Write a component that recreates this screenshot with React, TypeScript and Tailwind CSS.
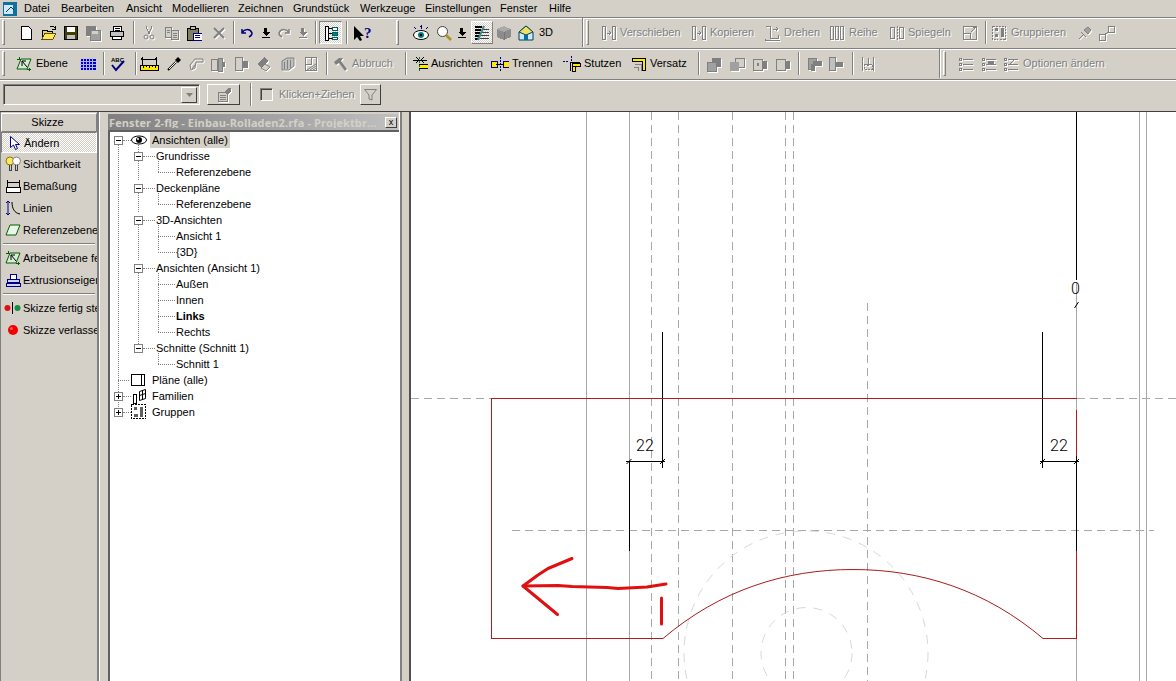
import React from "react";

const D = "[filter:drop-shadow(1px_1px_0_#fff)]";
const G = "#808080";

function S({ w = 16, h = 16, className = "", children }: { w?: number; h?: number; className?: string; children?: React.ReactNode }) {
  return (
    <svg width={w} height={h} viewBox={`0 0 ${w} ${h}`} shapeRendering="crispEdges" fill="none" className={`shrink-0 ${className}`}>
      {children}
    </svg>
  );
}

function Grip({ className = "" }: { className?: string }) {
  return <div className={`w-[3px] h-[25px] border-t border-l border-white border-b border-r border-b-[#808080] border-r-[#808080] shrink-0 ${className}`} />;
}
function Sep({ className = "" }: { className?: string }) {
  return <div className={`w-[2px] h-[23px] border-l border-[#808080] bg-white shrink-0 ${className}`} />;
}
function Divider({ className = "" }: { className?: string }) {
  return <div className={`w-[2px] h-[29px] border-l border-[#808080] bg-white shrink-0 ${className}`} />;
}
function Lbl({ className = "", off = false, children }: { className?: string; off?: boolean; children: React.ReactNode }) {
  return (
    <span className={`shrink-0 whitespace-nowrap ${off ? "text-[#808080] [text-shadow:1px_1px_0_#fff]" : "text-black"} ${className}`}>{children}</span>
  );
}

const DownArrow = ({ className = "", off = false }: { className?: string; off?: boolean }) => (
  <S className={`${className} ${off ? D : ""}`}>
    <path d="M6 3h3v4h3l-4 4-4-4h2z" fill={off ? G : "#000"} />
    <rect x="4" y="12" width="8" height="1" fill={off ? G : "#000"} />
  </S>
);

const Eye = ({ className = "" }: { className?: string }) => (
  <S className={className}>
    <ellipse cx="8" cy="10" rx="7.5" ry="4.5" fill="#fff" stroke="#000" shapeRendering="auto" />
    <circle cx="8" cy="10" r="3" fill="#008080" shapeRendering="auto" />
    <circle cx="8" cy="10" r="1.2" fill="#000" shapeRendering="auto" />
    <path d="M8 0v4M7 1h2M1 2l2 2M15 2l-2 2" stroke="#000080" />
  </S>
);

const Plane = ({ className = "", mark = true }: { className?: string; mark?: boolean }) => (
  <S className={className}>
    <path d="M5 3h10l-4 10H1z" fill="#d8ead8" stroke="#006000" shapeRendering="auto" />
    <path d="M3 1v3M1 3h4M13 12v3M11 13h4" stroke="#006000" />
    {mark && <path d="M6 5h4M6 5v5M6 5l5 6" stroke="#000" shapeRendering="auto" />}
  </S>
);

const Dim = ({ className = "" }: { className?: string }) => (
  <S w={19} className={className}>
    <path d="M2 1v8M16 1v8M2 3h14" stroke="#000" />
    <path d="M1 3l2-1M1 3l2 1M17 3l-2-1M17 3l-2 1" stroke="#000" />
    <rect x="0" y="9" width="18" height="5" fill="#ffe800" stroke="#000" />
    <path d="M3 10v2M6 10v1M9 10v2M12 10v1M15 10v2" stroke="#000" />
  </S>
);

const DisabledPair = ({ className = "", v = 0 }: { className?: string; v?: number }) => (
  <S w={18} className={`${className} ${D}`}>
    {v === 0 && <><rect x="7" y="2" width="9" height="9" fill="#808080" /><rect x="2" y="6" width="9" height="9" fill="#a0a0a0" stroke={G} /></>}
    {v === 1 && <><rect x="7" y="2" width="9" height="9" fill="#d4d0c8" stroke={G} /><rect x="2" y="6" width="9" height="9" fill="#a0a0a0" /></>}
    {v === 2 && <><rect x="8" y="5" width="8" height="8" fill="#808080" /><rect x="2" y="3" width="9" height="11" fill="#d4d0c8" stroke={G} /><path d="M6 7h2v3H6z" fill={G} /></>}
  </S>
);

const GapBars = ({ className = "", kind = 0 }: { className?: string; kind?: number }) => (
  <S className={`${className} ${D}`}>
    {kind === 0 && <><path d="M1.5 1.5h3v13h-3zM11.5 1.5h3v13h-3z" stroke={G} /><path d="M6 8h4M8 6l2 2-2 2" stroke={G} /></>}
    {kind === 1 && <><path d="M1.5 1.5h5v12h8v-4M1.5 13.5v2h14" stroke={G} /><path d="M9 4h5M12 2l2 2-2 2" stroke={G} /></>}
    {kind === 2 && <path d="M1.5 1.5h3v13h-3zM6.5 1.5h3v13h-3zM11.5 1.5h3v13h-3z" stroke={G} />}
    {kind === 3 && <><path d="M1.5 2.5h4v11h-4zM10.5 2.5h4v11h-4z" stroke={G} /><path d="M8 1v14" stroke={G} strokeDasharray="2 1" /></>}
    {kind === 4 && <><rect x="1.5" y="1.5" width="13" height="13" stroke={G} /><path d="M1 8h7v7M9 7l5-5M11 2h3v3" stroke={G} /></>}
    {kind === 5 && <><rect x="1.5" y="1.5" width="13" height="13" stroke={G} strokeDasharray="2 1" /><rect x="4" y="3" width="3" height="3" fill={G} /><rect x="4" y="9" width="3" height="3" fill={G} /><rect x="10" y="3" width="3" height="9" fill={G} /></>}
    {kind === 6 && <path d="M2 14l4-4M4 7l5 5M7 5l4 4 3-4-3-3z" stroke={G} fill="#a0a0a0" shapeRendering="auto" />}
  </S>
);

const Checks = ({ className = "", v = 0 }: { className?: string; v?: number }) => (
  <S className={`${className} ${D}`}>
    <rect x="1" y="2" width="2" height="2" stroke={G} />
    <rect x="1" y="7" width="2" height="2" stroke={G} />
    <rect x="1" y="12" width="2" height="2" stroke={G} />
    <path d="M5 3h10M5 8h10M5 13h10" stroke={G} />
    {v === 1 && <rect x="7" y="5" width="6" height="3" fill={G} />}
    {v === 2 && <path d="M6 9l6-6" stroke={G} shapeRendering="auto" />}
  </S>
);

function Toolbar1() {
  return (
    <div className="h-[31px] pb-[2px] flex items-center border-t border-white border-b border-b-[#808080]">
      <Grip className="ml-[2px]" />
      <S className="ml-[13px]"><path d="M3.5 1.5h7l3 3v10h-10z" fill="#fff" stroke="#000" /></S>
      <S className="ml-[7px]"><path d="M1.5 5.5h5v1h5v7h-10z" fill="#e8d060" stroke="#000" /><path d="M4 8h11l-3 6H1z" fill="#ffe860" stroke="#605000" /><path d="M9 1h3l3 3M14 1v3h-3" stroke="#000" /></S>
      <S className="ml-[6px]"><rect x="1.5" y="1.5" width="13" height="13" fill="#404000" stroke="#000" /><rect x="4" y="2" width="8" height="5" fill="#fff" /><rect x="4" y="10" width="8" height="4" fill="#c0c0c0" /></S>
      <S className={`ml-[6px] ${D}`}><rect x="1" y="1" width="10" height="10" fill={G} /><rect x="5" y="5" width="10" height="10" fill="#a0a0a0" stroke={G} /><rect x="7" y="6" width="6" height="3" fill="#d4d0c8" /></S>
      <S w={16} className="ml-[8px]"><path d="M4.5 1.5h8v5h-8z" fill="#fff" stroke="#000" /><path d="M1.5 6.5h13v5h-13z" fill="#c0c0c0" stroke="#000" /><path d="M3.5 11.5h9v3h-9z" fill="#fff" stroke="#000" /><path d="M6 3h5M6 5h5" stroke="#000" /></S>
      <Sep className="ml-[8px]" />
      <S className={`ml-[6px] ${D}`}><path d="M5 1l3 8M11 1L8 9" stroke={G} /><circle cx="5" cy="12" r="2" stroke={G} shapeRendering="auto" /><circle cx="11" cy="12" r="2" stroke={G} shapeRendering="auto" /></S>
      <S className={`ml-[7px] ${D}`}><path d="M1.5 2.5h6v10h-6zM7.5 5.5h7v9h-7z" stroke={G} fill="#d4d0c8" /><path d="M3 5h3M3 7h3M9 8h4M9 10h4M9 12h4" stroke={G} /></S>
      <S className="ml-[6px]"><rect x="1" y="3" width="11" height="12" fill="#808060" stroke="#000" /><rect x="4" y="1" width="5" height="3" fill="#c0c0c0" stroke="#000" /><rect x="7" y="8" width="9" height="7" fill="#fff" stroke="#000080" /><path d="M9 10h5M9 12h5" stroke="#000080" /></S>
      <S className={`ml-[9px] ${D}`}><path d="M3 3l10 10M13 3L3 13" stroke={G} strokeWidth="2" shapeRendering="auto" /></S>
      <Sep className="ml-[6px]" />
      <S className="ml-[4px]"><path d="M3 8c2-4 8-5 10 0 0 2-1 3-3 4M3 4v4h4" stroke="#000080" strokeWidth="1.5" shapeRendering="auto" /></S>
      <DownArrow className="ml-[3px]" />
      <S className={`ml-[2px] ${D}`}><path d="M13 8C11 4 5 3 3 8c0 2 1 3 3 4M13 4v4H9" stroke={G} strokeWidth="1.5" shapeRendering="auto" /></S>
      <DownArrow off className="ml-[3px]" />
      <Sep className="ml-[4px]" />
      <div className="ml-[2px] w-[23px] h-[23px] flex items-center justify-center border border-[#808080] border-b-white border-r-white [background:repeating-conic-gradient(#fff_0_25%,#d4d0c8_0_50%)_0_0/2px_2px] shrink-0">
        <S><rect x="2" y="1" width="3" height="14" fill="#fff" stroke="#000" /><rect x="9" y="2" width="5" height="3" fill="#fff" stroke="#006060" /><rect x="9" y="7" width="5" height="3" fill="#008080" stroke="#006060" /><rect x="9" y="12" width="5" height="2" fill="#fff" stroke="#006060" /><path d="M5 3h4M5 8h4M5 13h4" stroke="#000" /></S>
      </div>
      <Sep className="ml-[4px]" />
      <S w={20} className="ml-[5px]"><path d="M1 1v14l3-3 3 4 2-1-2-4h4z" fill="#000" shapeRendering="auto" /><text x="11" y="13" fontFamily="'Liberation Serif',serif" fontWeight="bold" fontSize="15" fill="#000080">?</text></S>
      <Grip className="ml-[23px]" />
      <Eye className="ml-[14px]" />
      <S className="ml-[7px]"><circle cx="6.5" cy="6.5" r="5" fill="#fff" stroke="#404040" shapeRendering="auto" /><path d="M10 10l5 5" stroke="#b09020" strokeWidth="2.5" shapeRendering="auto" /></S>
      <DownArrow className="ml-[2px]" />
      <div className="ml-[1px] w-[22px] h-[23px] flex items-center justify-center border border-white border-b-[#808080] border-r-[#808080] [background:repeating-conic-gradient(#fff_0_25%,#d4d0c8_0_50%)_0_0/2px_2px] shrink-0">
        <S><path d="M1 2h7M1 5h6M1 8h5M1 11h4M1 14h3" stroke="#000" strokeWidth="2" /><path d="M9 4h6M8 7h7M7 10h8M6 13h9" stroke="#404040" /><path d="M10 1L4 15" stroke="#3a8a8a" strokeWidth="2" shapeRendering="auto" /></S>
      </div>
      <S className={`ml-[3px]`}><path d="M8 1l7 3v8l-7 3-7-3V4z" fill="#8c8c8c" /><path d="M8 1l7 3-7 3-7-3z" fill="#aaa" /><path d="M8 7v8" stroke="#777" /></S>
      <S className="ml-[6px]"><path d="M8 1l7 6v8H1V7z" fill="#cfe8f8" stroke="#004060" shapeRendering="auto" /><path d="M8 1l7 6-7 3-7-3z" fill="#f0e060" stroke="#004060" shapeRendering="auto" /><rect x="6" y="10" width="4" height="5" fill="#0070a0" /></S>
      <Lbl className="ml-[5px] w-[16px]">3D</Lbl>
      <Divider className="ml-[27px]" />
      <Grip className="ml-[2px]" />
      <GapBars kind={0} className="ml-[12px]" />
      <Lbl off className="ml-[3px] w-[60px]">Verschieben</Lbl>
      <GapBars kind={0} className="ml-[11px]" />
      <Lbl off className="ml-[3px] w-[43px]">Kopieren</Lbl>
      <GapBars kind={1} className="ml-[11px]" />
      <Lbl off className="ml-[4px] w-[36px]">Drehen</Lbl>
      <GapBars kind={2} className="ml-[9px]" />
      <Lbl off className="ml-[4px] w-[29px]">Reihe</Lbl>
      <GapBars kind={3} className="ml-[11px]" />
      <Lbl off className="ml-[3px] w-[43px]">Spiegeln</Lbl>
      <GapBars kind={4} className="ml-[11px]" />
      <Sep className="ml-[7px]" />
      <GapBars kind={5} className="ml-[4px]" />
      <Lbl off className="ml-[4px] w-[53px]">Gruppieren</Lbl>
      <GapBars kind={6} className="ml-[13px]" />
      <S w={18} className={`ml-[5px] ${D}`}><rect x="1.5" y="9.5" width="6" height="6" stroke={G} /><rect x="10.5" y="1.5" width="6" height="6" stroke={G} /><path d="M7 9l4-2" stroke={G} /></S>
    </div>
  );
}

const OffShape = ({ className = "", v = 0 }: { className?: string; v?: number }) => (
  <S className={`${className} ${D}`}>
    {v === 0 && <path d="M3 14l-1-5 5-6h8v3H8l-1 6zM4 13l3-4" stroke={G} shapeRendering="auto" />}
    {v === 1 && <><rect x="1.5" y="3.5" width="6" height="11" stroke={G} fill="#d4d0c8" /><rect x="8" y="2" width="4" height="13" fill="#a0a0a0" stroke={G} /><rect x="13" y="6" width="2" height="5" fill={G} /></>}
    {v === 2 && <><rect x="2.5" y="1.5" width="7" height="13" stroke={G} fill="#d4d0c8" /><rect x="10" y="5" width="5" height="7" fill={G} /></>}
    {v === 3 && <><path d="M1 8l7-7 4 4-7 7z" fill="#808080" /><path d="M5 12l4-4 5 3-4 4z" fill="#d4d0c8" stroke={G} shapeRendering="auto" /></>}
    {v === 4 && <><path d="M2 5l5-3h7v8l-5 4H2z" stroke={G} fill="#c0c0c0" shapeRendering="auto" /><path d="M4 6v7M7 4v9M10 4v8" stroke={G} /></>}
    {v === 5 && <><rect x="2.5" y="1.5" width="11" height="13" stroke={G} /><path d="M8 2v6H3" stroke={G} /><path d="M4 14l9-6M7 14l6-4M10 14l3-2" stroke={G} shapeRendering="auto" /></>}
    {v === 6 && <><path d="M1.5 2.5h8v6h-3v5h-5z" fill="#a0a0a0" stroke={G} /><rect x="6" y="5" width="9" height="5" fill={G} /><rect x="4" y="8" width="4" height="7" fill="#808080" /></>}
    {v === 7 && <><rect x="1.5" y="1.5" width="6" height="13" fill="#c0c0c0" stroke={G} /><rect x="8" y="6" width="7" height="5" fill="#808080" /></>}
    {v === 8 && <><path d="M2.5 1v14M13.5 1v14" stroke={G} /><rect x="4" y="8" width="8" height="5" stroke={G} strokeDasharray="2 1" /><path d="M8 2v8M6 8l2 2 2-2" stroke={G} /></>}
  </S>
);

function Toolbar2() {
  return (
    <div className="h-[31px] pb-[2px] flex items-center border-t border-white border-b border-b-[#808080]">
      <Grip className="ml-[2px]" />
      <Plane className="ml-[11px]" />
      <Lbl className="ml-[4px] w-[32px]">Ebene</Lbl>
      <S className="ml-[12px]"><rect x="0.5" y="2.5" width="15" height="11" fill="#0000c8" /><path d="M3.5 2v12M6.5 2v12M9.5 2v12M12.5 2v12M0 5.5h16M0 8.5h16M0 11.5h16" stroke="#b0b0ff" /></S>
      <Sep className="ml-[7px]" />
      <S className="ml-[5px]"><text x="1" y="6" fontFamily="'Liberation Sans',sans-serif" fontSize="6" fontWeight="bold" fill="#000">ABC</text><path d="M2 9l4 5 8-9" stroke="#000080" strokeWidth="2" shapeRendering="auto" /></S>
      <Sep className="ml-[9px]" />
      <Dim className="ml-[3px]" />
      <S className="ml-[7px]"><path d="M2 14l8-8" stroke="#000" strokeWidth="2" shapeRendering="auto" /><path d="M3 13l7-7" stroke="#fff" shapeRendering="auto" /><path d="M9 4l3 3 3-3-3-3z" fill="#000" shapeRendering="auto" /></S>
      <OffShape v={0} className="ml-[6px]" />
      <OffShape v={1} className="ml-[6px]" />
      <OffShape v={2} className="ml-[7px]" />
      <OffShape v={3} className="ml-[7px]" />
      <OffShape v={4} className="ml-[8px]" />
      <OffShape v={5} className="ml-[7px]" />
      <Sep className="ml-[7px]" />
      <S className={`ml-[4px] ${D}`}><path d="M2 6l5-4h4l-2 3 6 8-2 2-6-8-3 2z" fill={G} shapeRendering="auto" /></S>
      <Lbl off className="ml-[4px] w-[42px]">Abbruch</Lbl>
      <Sep className="ml-[11px]" />
      <S className="ml-[5px]"><path d="M1 4h14" stroke="#000" /><path d="M4 1l3 3-3 3M12 1L9 4l3 3" stroke="#000" /><rect x="7" y="8" width="9" height="1" fill="#000" /><rect x="7" y="9" width="9" height="3" fill="#ffe800" /><rect x="7" y="12" width="9" height="1" fill="#000" /><path d="M7 1v15" stroke="#008000" strokeDasharray="2 2" /></S>
      <Lbl className="ml-[3px] w-[51px]">Ausrichten</Lbl>
      <S w={18} className="ml-[9px]"><rect x="0" y="5" width="6" height="6" fill="#ffe800" stroke="#000080" /><rect x="12" y="5" width="6" height="6" fill="#ffe800" stroke="#000080" /><path d="M9 1v14" stroke="#000080" strokeDasharray="2 1" /><path d="M5 8h8" stroke="#000" /></S>
      <Lbl className="ml-[3px] w-[41px]">Trennen</Lbl>
      <S w={18} className="ml-[10px]"><path d="M0 5h6M8 0v5" stroke="#000080" strokeDasharray="2 1" /><path d="M7 15V6h10" stroke="#000" strokeWidth="1" /><rect x="9" y="7" width="3" height="8" fill="#ffe800" stroke="#000" /><rect x="9" y="7" width="8" height="3" fill="#ffe800" stroke="#000" /></S>
      <Lbl className="ml-[3px] w-[37px]">Stutzen</Lbl>
      <S className="ml-[10px]"><path d="M1.5 2.5h13v12h-3v-9h-10z" fill="#ffe800" stroke="#000" /><path d="M4 8h6v7" stroke={G} /><path d="M3 11h4v4" stroke={G} /></S>
      <Lbl className="ml-[3px] w-[37px]">Versatz</Lbl>
      <Sep className="ml-[11px]" />
      <DisabledPair v={0} className="ml-[5px]" />
      <DisabledPair v={1} className="ml-[5px]" />
      <DisabledPair v={2} className="ml-[5px]" />
      <S w={17} className={`ml-[5px] ${D}`}><rect x="8" y="5" width="8" height="8" fill="#808080" /><rect x="2" y="3" width="9" height="11" fill="#d4d0c8" stroke={G} /></S>
      <Sep className="ml-[7px]" />
      <OffShape v={6} className="ml-[7px]" />
      <OffShape v={7} className="ml-[5px]" />
      <Sep className="ml-[8px]" />
      <OffShape v={8} className="ml-[6px]" />
      <Divider className="ml-[63px]" />
      <Grip className="ml-[2px]" />
      <Checks className="ml-[12px]" />
      <Checks v={1} className="ml-[7px]" />
      <Checks v={2} className="ml-[6px]" />
      <Lbl off className="ml-[4px] w-[80px]">Optionen ändern</Lbl>
    </div>
  );
}

function Toolbar3() {
  return (
    <div className="h-[31px] pb-[3px] flex items-center border-t border-white">
      <div className="ml-[3px] w-[197px] h-[21px] flex items-center justify-end pr-[2px] border border-[#808080] border-b-white border-r-white shadow-[inset_1px_1px_0_#404040] shrink-0">
        <div className="w-[16px] h-[16px] flex items-center justify-center border border-white border-b-[#404040] border-r-[#404040]">
          <S w={7} h={4}><path d="M0 0h7L3.5 4z" fill={G} shapeRendering="auto" /></S>
        </div>
      </div>
      <div className="ml-[7px] w-[33px] h-[21px] flex items-center justify-center border border-white border-b-[#404040] border-r-[#404040] shrink-0">
        <S className={D}><path d="M2.5 5.5h9v9h-9z" fill="#d4d0c8" stroke={G} /><path d="M4 8h6M4 10h6M4 12h6" stroke={G} /><path d="M8 5l4-4h3v3l-4 4" fill={G} /></S>
      </div>
      <Sep className="ml-[10px]" />
      <div className="ml-[8px] w-[13px] h-[13px] border border-[#808080] border-b-white border-r-white shadow-[inset_1px_1px_0_#404040] shrink-0" />
      <Lbl off className="ml-[6px] w-[74px]">Klicken+Ziehen</Lbl>
      <div className="ml-[7px] w-[21px] h-[21px] flex items-center justify-center border border-white border-b-[#404040] border-r-[#404040] shrink-0">
        <S w={13} h={13}><path d="M.5 1.5h12L8 7v5L5 11V7z" fill="#d4d0c8" stroke={G} shapeRendering="auto" /></S>
      </div>
    </div>
  );
}

function SideRow({ icon, children }: { icon: React.ReactNode; children: React.ReactNode }) {
  return (
    <div className="h-[22px] flex items-center overflow-hidden whitespace-nowrap">
      <div className="w-[22px] flex justify-center shrink-0 pl-[2px]">{icon}</div>
      <span>{children}</span>
    </div>
  );
}

function LeftPanel() {
  return (
    <div className="w-[97px] shrink-0 pt-[1px] border-l border-[#808080]">
      <div className="h-[19px] pr-[3px] flex items-center justify-center border border-white border-b-[#808080] border-r-[#808080] shadow-[1px_1px_0_#404040]">Skizze</div>
      <div className="h-[21px] pt-[1px] flex items-center border border-[#808080] border-b-white border-r-white [background:repeating-conic-gradient(#fff_0_25%,#d4d0c8_0_50%)_0_0/2px_2px]">
        <div className="w-[21px] flex justify-center shrink-0 pl-[3px]">
          <S><path d="M4.5 1.5v11l3-2.5 2 4.5 2-1-2-4h4z" fill="#fff" stroke="#000080" shapeRendering="auto" /></S>
        </div>
        <span className="ml-[1px]">Ändern</span>
      </div>
      <SideRow icon={<S><circle cx="5" cy="5" r="4" fill="#ffe860" stroke="#808000" shapeRendering="auto" /><circle cx="11.5" cy="5" r="4" fill="#fff" stroke={G} shapeRendering="auto" /><path d="M4 9v5h2V9M10.5 9v5h2V9" stroke="#404040" /></S>}>Sichtbarkeit</SideRow>
      <SideRow icon={<S><path d="M2 2v9M14 2v9M2 4h12" stroke="#000" /><rect x="1" y="9" width="14" height="5" fill="#fff" stroke="#000" /></S>}>Bemaßung</SideRow>
      <SideRow icon={<S><path d="M3 1v14M1 3l2-2 2 2M1 13l2 2 2-2" stroke="#000080" shapeRendering="auto" /><path d="M7 2c0 6 2 11 8 12" stroke="#000" shapeRendering="auto" /></S>}>Linien</SideRow>
      <SideRow icon={<S><path d="M5 3h10l-4 10H1z" fill="#eaf5ea" stroke="#006000" shapeRendering="auto" /></S>}>Referenzebene</SideRow>
      <div className="h-[6px] flex items-center"><div className="w-[92px] ml-[2px] h-[2px] border-t border-[#808080] bg-white" /></div>
      <SideRow icon={<Plane />}>Arbeitsebene festlegen</SideRow>
      <SideRow icon={<S><path d="M5 2h6v5H5z" fill="#fff" stroke="#000080" /><path d="M2 7h12v3H2zM1 11h14v3H1z" fill="#d0d0f0" stroke="#000080" /></S>}>Extrusionseigenschaften</SideRow>
      <div className="h-[6px] flex items-center"><div className="w-[92px] ml-[2px] h-[2px] border-t border-[#808080] bg-white" /></div>
      <SideRow icon={<S w={18}><circle cx="3.5" cy="8" r="3" fill="#e01010" shapeRendering="auto" /><path d="M8.5 2v12" stroke="#000" /><circle cx="13.5" cy="8" r="3" fill="#109040" shapeRendering="auto" /></S>}>Skizze fertig stellen</SideRow>
      <SideRow icon={<S><circle cx="8" cy="8" r="5" fill="#f00000" shapeRendering="auto" /><circle cx="6.5" cy="6.5" r="1.5" fill="#ff6060" shapeRendering="auto" /></S>}>Skizze verlassen</SideRow>
    </div>
  );
}

function Box({ plus = false, className = "" }: { plus?: boolean; className?: string }) {
  return (
    <S w={9} h={9} className={className}>
      <rect x="0.5" y="0.5" width="8" height="8" fill="#fff" stroke={G} />
      <path d="M2 4.5h5" stroke="#000" />
      {plus && <path d="M4.5 2v5" stroke="#000" />}
    </S>
  );
}
const Dots = ({ className }: { className: string }) => <div className={`border-t border-dotted border-[#808080] shrink-0 ${className}`} />;

const L1 = ({ children }: { children: React.ReactNode }) => (
  <div className="h-4 flex items-center">
    <Box className="ml-[24px]" />
    <Dots className="w-[12px]" />
    <span className="ml-[1px]">{children}</span>
  </div>
);
const L2 = ({ children, bold = false }: { children: React.ReactNode; bold?: boolean }) => (
  <div className="h-4 flex items-center">
    <Dots className="ml-[48px] w-[17px]" />
    <span className={`ml-[1px] ${bold ? "font-bold" : ""}`}>{children}</span>
  </div>
);

function TreeGuides() {
  return (
    <svg width="70" height="290" viewBox="110 132 70 290" className="absolute left-0 top-0 pointer-events-none" shapeRendering="crispEdges" fill="none" stroke="#808080" strokeDasharray="1 1">
      <path d="M118.5 145v247M118.5 392v16M138.5 145v7M138.5 161v19M138.5 189v23M138.5 221v39M138.5 269v75" />
      <path d="M158.5 161v11M158.5 193v11M158.5 225v26M158.5 273v59M158.5 353v11" />
      <path d="M118 380h12" />
    </svg>
  );
}

const Eye2 = () => (
  <S>
    <ellipse cx="8" cy="8" rx="7.5" ry="4" fill="#fff" stroke="#000" shapeRendering="auto" />
    <circle cx="8" cy="8" r="3" fill="#000" shapeRendering="auto" />
    <circle cx="7" cy="7" r="1" fill="#fff" shapeRendering="auto" />
  </S>
);

function Tree() {
  return (
    <div className="relative flex-1 bg-white overflow-hidden border-l-2 border-t-2 border-[#606060]">
      <TreeGuides />
      <div className="relative">
        <div className="h-4 flex items-center">
          <Box className="ml-[4px]" />
          <Dots className="w-[8px]" />
          <Eye2 />
          <span className="ml-[3px] px-[2px] h-4 flex items-center bg-[#d4d0c8]">Ansichten (alle)</span>
        </div>
        <L1>Grundrisse</L1>
        <L2>Referenzebene</L2>
        <L1>Deckenpläne</L1>
        <L2>Referenzebene</L2>
        <L1>3D-Ansichten</L1>
        <L2>Ansicht 1</L2>
        <L2>{"{3D}"}</L2>
        <L1>Ansichten (Ansicht 1)</L1>
        <L2>Außen</L2>
        <L2>Innen</L2>
        <L2 bold>Links</L2>
        <L2>Rechts</L2>
        <L1>Schnitte (Schnitt 1)</L1>
        <L2>Schnitt 1</L2>
        <div className="h-4 flex items-center">
          <S className="ml-[20px]"><rect x="1.5" y="2.5" width="13" height="11" fill="#fff" stroke="#000" /><path d="M11.5 3v10" stroke="#000" /></S>
          <span className="ml-[6px]">Pläne (alle)</span>
        </div>
        <div className="h-4 flex items-center">
          <Box plus className="ml-[4px]" />
          <Dots className="w-[8px]" />
          <S><path d="M2.5 6.5h3v9h-3z" stroke="#000" /><path d="M8.5 3.5l6-2v9l-6 2zM11.5 3v8M8.5 7.5l6-2" stroke="#000" shapeRendering="auto" /></S>
          <span className="ml-[5px]">Familien</span>
        </div>
        <div className="h-4 flex items-center">
          <Box plus className="ml-[4px]" />
          <Dots className="w-[8px]" />
          <S><rect x="0.5" y="0.5" width="14" height="14" stroke="#000" strokeDasharray="2 1" /><rect x="3" y="3" width="3" height="3" fill="#606060" /><rect x="3" y="10" width="4" height="3" fill="#606060" /><rect x="9" y="3" width="3" height="10" fill="#606060" /></S>
          <span className="ml-[5px]">Gruppen</span>
        </div>
      </div>
    </div>
  );
}

function Browser() {
  return (
    <div className="w-[291px] ml-[8px] shrink-0 flex flex-col pt-[2px]">
      <div className="h-[16px] mr-[1px] flex items-center bg-gradient-to-r from-[#808080] to-[#c0c0c0] pl-[1px] pr-[1px] shrink-0">
        <span className="flex-1 overflow-hidden font-['Open_Sans','DejaVu_Sans',sans-serif] font-bold text-[11px] tracking-[0.1px] text-[#d4d0c8] whitespace-nowrap">Fenster 2-flg - Einbau-Rolladen2.rfa - Projektbr...</span>
        <div className="w-[12px] h-[11px] bg-[#d4d0c8] border border-white border-b-[#404040] border-r-[#404040] flex items-center justify-center text-[9px] leading-none text-black shrink-0">x</div>
      </div>
      <Tree />
    </div>
  );
}

function Canvas() {
  const gray = "#a8a8a8";
  return (
    <div className="flex-1 bg-white overflow-hidden">
      <svg width="765" height="569" viewBox="411 112 765 569" fill="none" className="block">
        <g stroke={gray} shapeRendering="crispEdges">
          <path d="M586.5 112v569M629.5 112v569M1076.5 283v115M1076.5 639v42M1146.5 112v569M1139.5 112v569" />
          <path d="M651.5 112v569M678.5 112v569M732.5 112v569M785.5 112v569M793.5 112v569" strokeDasharray="8 5" />
          <path d="M867.5 303v378" strokeDasharray="8 5" />
          <path d="M411 398.5h80M1077 398.5h99M512 530.5h642" strokeDasharray="8 5" />
          <path d="M1076.5 398v12" />
        </g>
        <g stroke="#d8d8d8" strokeDasharray="9 8">
          <circle cx="806" cy="653" r="122" />
          <circle cx="806.5" cy="653" r="45.5" />
        </g>
        <g stroke="#000" shapeRendering="crispEdges">
          <path d="M1076.5 112v168M1076.5 456v95M662.5 332v136M629.5 461v90M1042.5 332v136M626 461.5h39M1040 461.5h39" />
        </g>
        <g stroke="#000" strokeWidth="1">
          <path d="M626.5 464l5-5M660 464l5-5M1040 464l5-5M1074 464l5-5M1074.5 308l4-6" />
        </g>
        <g stroke="#b01c1c" shapeRendering="crispEdges">
          <path d="M491.5 398.5h585M491.5 398v241M491 638.5h172M1043 638.5h34M1076.5 410v46M1076.5 551v88" />
        </g>
        <path d="M663 638.5C720 590 785 569.5 853 569.5C921 569.5 986 590 1043 638.5" stroke="#a81c1c" />
        <g stroke="#e01010" strokeWidth="3" strokeLinejoin="round" strokeLinecap="round">
          <path d="M523 586L558 585.5L572 586.5L607 587.5L618 588.5L647 587L666 584" />
          <path d="M572 558.5L548 568.5L538 575L523 586L557.5 614.5" />
          <path d="M661.5 598v26" />
        </g>
        <g fill="#000" fontFamily="Roboto,'Liberation Sans',sans-serif" fontWeight="300" fontSize="16">
          <text x="636" y="451">22</text>
          <text x="1050" y="451">22</text>
          <text x="1071" y="294">0</text>
        </g>
      </svg>
    </div>
  );
}

export default function App() {
  const menu: [string, string][] = [
    ["Datei", "w-[37px]"],
    ["Bearbeiten", "w-[65px]"],
    ["Ansicht", "w-[46px]"],
    ["Modellieren", "w-[66px]"],
    ["Zeichnen", "w-[55px]"],
    ["Grundstück", "w-[67px]"],
    ["Werkzeuge", "w-[65px]"],
    ["Einstellungen", "w-[75px]"],
    ["Fenster", "w-[49px]"],
    ["Hilfe", "w-[30px]"],
  ];
  return (
    <div className="w-[1176px] h-[681px] overflow-hidden flex flex-col bg-[#d4d0c8] text-black text-[11px] leading-none font-['Liberation_Sans','Noto_Sans',sans-serif]">
      <div className="h-[18px] flex items-center border-b border-[#808080] shrink-0">
        <S className="ml-[2px]"><rect x="1" y="1" width="14" height="14" fill="#1070a0" /><rect x="2" y="4" width="9" height="9" fill="#d0e8f8" /><path d="M4 11l5-5 3 3" stroke="#004060" shapeRendering="auto" /></S>
        <div className="w-[6px] shrink-0" />
        {menu.map(([m, w]) => (
          <span key={m} className={`${w} shrink-0 whitespace-nowrap`}>{m}</span>
        ))}
      </div>
      <Toolbar1 />
      <Toolbar2 />
      <Toolbar3 />
      <div className="flex-1 flex min-h-0 border-t border-[#404040]">
        <LeftPanel />
        <div className="w-[3px] bg-[#808080] border-r border-white shrink-0" />
        <Browser />
        <div className="w-[12px] shrink-0 flex">
          <div className="w-[1px] bg-white" />
          <div className="w-[2px] bg-[#808080]" />
          <div className="flex-1" />
          <div className="w-[2px] bg-[#505050]" />
        </div>
        <Canvas />
      </div>
    </div>
  );
}
